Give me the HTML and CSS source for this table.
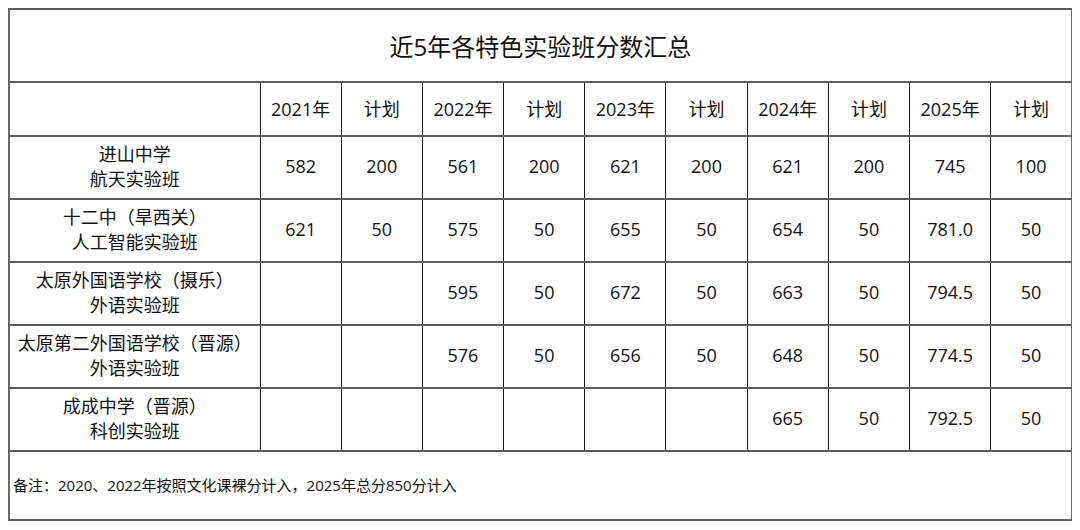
FILE: index.html
```html
<!DOCTYPE html>
<html lang="zh">
<head>
<meta charset="utf-8">
<link rel="stylesheet" href="styles.css">
</head>
<body>
<table class="sheet">
  <colgroup>
    <col class="c-name">
    <col class="c-num"><col class="c-num"><col class="c-num"><col class="c-num"><col class="c-num">
    <col class="c-num"><col class="c-num"><col class="c-num"><col class="c-num"><col class="c-num">
  </colgroup>
  <tr class="r-title"><td colspan="11" class="title">近5年各特色实验班分数汇总</td></tr>
  <tr class="r-head">
    <td></td>
    <td>2021年</td><td>计划</td><td>2022年</td><td>计划</td><td>2023年</td><td>计划</td><td>2024年</td><td>计划</td><td>2025年</td><td>计划</td>
  </tr>
  <tr class="r-data">
    <td class="name">进山中学<br>航天实验班</td>
    <td>582</td><td>200</td><td>561</td><td>200</td><td>621</td><td>200</td><td>621</td><td>200</td><td>745</td><td>100</td>
  </tr>
  <tr class="r-data">
    <td class="name">十二中（旱西关）<br>人工智能实验班</td>
    <td>621</td><td>50</td><td>575</td><td>50</td><td>655</td><td>50</td><td>654</td><td>50</td><td>781.0</td><td>50</td>
  </tr>
  <tr class="r-data">
    <td class="name">太原外国语学校（摄乐）<br>外语实验班</td>
    <td></td><td></td><td>595</td><td>50</td><td>672</td><td>50</td><td>663</td><td>50</td><td>794.5</td><td>50</td>
  </tr>
  <tr class="r-data">
    <td class="name">太原第二外国语学校（晋源）<br>外语实验班</td>
    <td></td><td></td><td>576</td><td>50</td><td>656</td><td>50</td><td>648</td><td>50</td><td>774.5</td><td>50</td>
  </tr>
  <tr class="r-data">
    <td class="name">成成中学（晋源）<br>科创实验班</td>
    <td></td><td></td><td></td><td></td><td></td><td></td><td>665</td><td>50</td><td>792.5</td><td>50</td>
  </tr>
  <tr class="r-note"><td colspan="11" class="note">备注：2020、2022年按照文化课裸分计入，2025年总分850分计入</td></tr>
</table>
</body>
</html>
```
FILE: styles.css
```css
html, body {
  background: #ffffff;
}
body {
  margin: 8px;
  font-family: "Open Sans", "Noto Sans CJK SC", sans-serif;
  color: #111111;
}
.sheet {
  border-collapse: collapse;
  table-layout: fixed;
  width: 1063px;
  border: 2px solid #6a6a6a;
}
.c-name { width: 251px; }
.c-num { width: 81.2px; }
.sheet td {
  border-left: 1px solid #1a1a1a;
  border-right: 1px solid #1a1a1a;
  border-top: 2px solid #5c5c5c;
  border-bottom: 2px solid #5c5c5c;
  text-align: center;
  vertical-align: middle;
  font-size: 18px;
  line-height: 26px;
  padding: 0;
}
.r-title { height: 73px; }
.r-head { height: 54px; }
.r-data { height: 63px; }
.r-data td { padding-bottom: 3px; }
.r-note { height: 69px; }
.sheet td.title {
  font-size: 24px;
  padding-top: 2px;
}
.sheet td.name {
  line-height: 25px;
  padding-bottom: 1px;
}
.sheet td.note {
  text-align: left;
  font-size: 15px;
  padding-left: 3px;
  padding-bottom: 2px;
}
```
